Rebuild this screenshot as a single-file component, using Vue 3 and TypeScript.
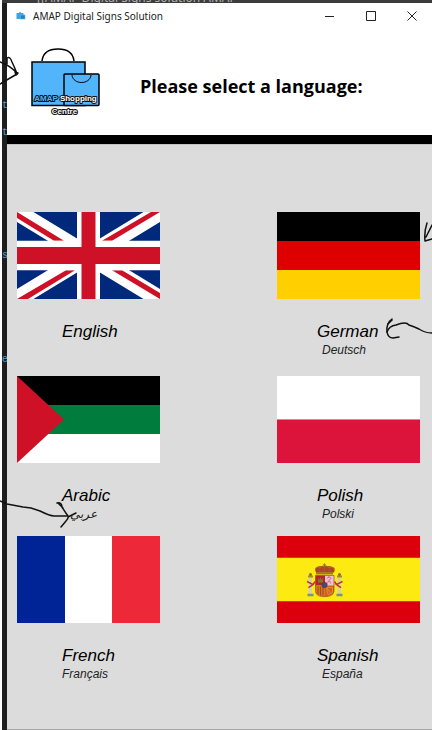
<script setup lang="ts">
import { ref } from 'vue'

interface Language {
  code: string
  name: string
  native: string
}

const languages: Language[] = [
  { code: 'en', name: 'English', native: '' },
  { code: 'de', name: 'German', native: 'Deutsch' },
  { code: 'ar', name: 'Arabic', native: 'عربي' },
  { code: 'pl', name: 'Polish', native: 'Polski' },
  { code: 'fr', name: 'French', native: 'Français' },
  { code: 'es', name: 'Spanish', native: 'España' },
]

const selected = ref('')
</script>

<template>
  <div class="desktop">
    <div class="backdrop" aria-hidden="true">
      <span class="backdrop-title">&nbsp;[[AMAP Digital Signs solution AMAP</span>
      <span class="code code-a">t</span>
      <span class="code code-b">t</span>
      <span class="code code-c">s</span>
      <span class="code code-d">e</span>
    </div>

    <div class="window">
      <div class="titlebar">
        <svg class="app-icon" viewBox="0 0 10 10" aria-hidden="true">
          <path d="M2.500 2.500Q4 0 5.500 2.500" fill="none" stroke="#8a9aa6" />
          <rect x="0.500" y="2" width="7" height="6" fill="#3ba6e2" />
          <rect x="4.500" y="4" width="4.500" height="4" fill="#1d86c4" stroke="#5ab6e8" stroke-width="0.600" />
        </svg>
        <span class="app-name">AMAP Digital Signs Solution</span>
        <button class="control" type="button" aria-label="Minimize">
          <svg viewBox="0 0 10 10"><path d="M0 5.500H9" /></svg>
        </button>
        <button class="control" type="button" aria-label="Maximize">
          <svg viewBox="0 0 10 10"><path d="M0.500 0.500H9.500V9.500H0.500Z" /></svg>
        </button>
        <button class="control" type="button" aria-label="Close">
          <svg viewBox="0 0 10 10"><path d="M0.500 0.500L9.500 9.500M9.500 0.500L0.500 9.500" /></svg>
        </button>
      </div>

      <header class="header">
        <svg class="logo" viewBox="0 0 70 70" role="img" aria-label="AMAP Shopping Centre">
          <path d="M11 14C12 5 19 2 27 2S42 5 43 14" fill="none" stroke="#000" stroke-width="1.500" />
          <rect x="1" y="15" width="53" height="43.500" fill="#52b4fb" stroke="#000" stroke-width="1.500" />
          <rect x="33" y="27" width="35" height="31.500" rx="1" fill="#52b4fb" stroke="#000" stroke-width="1.500" />
          <path d="M41 28C42 38 59 38 60 28" fill="none" stroke="#000" />
          <text class="logo-text" x="34.500" y="53.500"><tspan class="logo-blue">AMAP</tspan> Shopping</text>
          <text class="logo-text" x="33.500" y="66.500">Centre</text>
        </svg>
        <h1>Please select a language:</h1>
      </header>

      <main class="languages">
        <button
          v-for="lang in languages"
          :key="lang.code"
          class="card"
          type="button"
          :aria-pressed="selected === lang.code"
          @click="selected = lang.code"
        >
          <svg v-if="lang.code === 'en'" class="flag" viewBox="0 0 143 86" preserveAspectRatio="none">
            <path fill="#00297b" d="M0 0H143V86H0Z" />
            <path d="M0 0L143 86M143 0L0 86" stroke="#fff" stroke-width="17" />
            <path fill="#ce1126" d="M0 0L47 28.500H37L0 6ZM143 0H134L85 28.500H95L143 0ZM0 86L49 57.500H58L11 86ZM143 86V80L105 57.500H95Z" />
            <path fill="#fff" d="M60 0H83V86H60ZM0 28.500H143V57.500H0Z" />
            <path fill="#ce1126" d="M64.500 0H78.500V86H64.500ZM0 34.500H143V51.500H0Z" />
          </svg>
          <svg v-else-if="lang.code === 'de'" class="flag" viewBox="0 0 143 87" preserveAspectRatio="none">
            <path d="M0 0H143V29H0Z" />
            <path fill="#de0000" d="M0 29H143V58H0Z" />
            <path fill="#ffcf00" d="M0 58H143V87H0Z" />
          </svg>
          <svg v-else-if="lang.code === 'ar'" class="flag" viewBox="0 0 143 87" preserveAspectRatio="none">
            <path d="M0 0H143V29H0Z" />
            <path fill="#007c3d" d="M0 29H143V58H0Z" />
            <path fill="#fff" d="M0 58H143V87H0Z" />
            <path fill="#ce1126" d="M0 0L47 43.500L0 87Z" />
          </svg>
          <svg v-else-if="lang.code === 'pl'" class="flag" viewBox="0 0 143 86" preserveAspectRatio="none">
            <path fill="#fff" d="M0 0H143V43H0Z" />
            <path fill="#dc143c" d="M0 43H143V86H0Z" />
          </svg>
          <svg v-else-if="lang.code === 'fr'" class="flag" viewBox="0 0 143 86" preserveAspectRatio="none">
            <path fill="#002395" d="M0 0H48V86H0Z" />
            <path fill="#fff" d="M48 0H95V86H48Z" />
            <path fill="#ed2939" d="M95 0H143V86H95Z" />
          </svg>
          <svg v-else class="flag" viewBox="0 0 143 86" preserveAspectRatio="none">
            <path fill="#dc000c" d="M0 0H143V86H0Z" />
            <path fill="#fcea10" d="M0 21.500H143V64.500H0Z" />
            <!-- crown -->
            <path fill="#b5402a" d="M39 36C36 31 42 29 47.500 30C53 29 60 31 57 36Z" />
            <path d="M38.500 33Q39 30 43 31Q47.500 28 52 31Q57 30 57.500 33" fill="none" stroke="#a87b18" />
            <path d="M47.500 27V36M46 28.500H49M42 31L43 36M53 31L52 36" stroke="#8c6b20" stroke-width="0.800" />
            <path fill="#a8791c" d="M39 35.500H56V38H39Z" />
            <!-- shield -->
            <path fill="#b8222a" d="M38.500 39H48V49H38.500Z" />
            <path fill="#e9c3c9" d="M48 39H57V49H48Z" />
            <path fill="#cf7a1c" d="M38.500 49H48V60Q39 59 38.500 55Z" />
            <path fill="#d0611f" d="M48 49H57V55Q56 59 48 60Z" />
            <path d="M41 50V58M43.500 50V59M46 50V59" stroke="#a33a24" stroke-width="0.800" />
            <path d="M49.500 51H55.500V56L51 58ZM49.500 51L54 57" fill="none" stroke="#dc9930" stroke-width="0.800" />
            <path d="M50 42L52 40L54 42L52 44L54 47M50 47L52 44" fill="none" stroke="#d873a0" />
            <path fill="#7c7a27" d="M41 46V42H42V43H43V41H44V43H45V42H46V46Z" />
            <path d="M38.500 39H57V55Q56 60 47.500 60Q39 60 38.500 55Z" fill="none" stroke="#9c4b24" stroke-width="0.700" />
            <circle cx="47.500" cy="48.500" r="2.700" fill="#31527d" stroke="#8e2733" stroke-width="0.700" />
            <!-- pillars -->
            <path fill="#d6d0ab" d="M31.500 41H35V57H31.500ZM60.500 41H64V57H60.500Z" />
            <path fill="#a58a30" d="M31 39H36V41H31ZM60 39H65V41H60Z" />
            <circle cx="33.500" cy="38" r="1.500" fill="#8e6b25" />
            <circle cx="62.500" cy="38" r="1.500" fill="#8e6b25" />
            <path fill="#72958b" d="M30.500 57H36.500V59.500H30.500ZM59.500 57H65.500V59.500H59.500Z" />
            <path d="M30 45L36 48L31.500 51M36 48L38 45M65.500 45L59.500 48L64 51M59.500 48L57.500 45" fill="none" stroke="#c2343a" stroke-width="1.500" />
          </svg>
          <span class="name">{{ lang.name }}</span>
          <span v-if="lang.native" class="native" :class="{ arabic: lang.code === 'ar' }" :lang="lang.code">{{ lang.native }}</span>
        </button>
      </main>
    </div>

    <!-- hand-drawn arrows over the window -->
    <svg class="ink ink-left" viewBox="0 0 110 540" aria-hidden="true">
      <path d="M0 62Q9 65 17 73M7 64V58Q10 56 12 62Q15 68 17 74L5 81M0 84L5 81" />
      <path d="M15 72L18 73L16 75Z" />
      <path d="M0 501L7 504L23 507L31 508L40 511Q50 516 54 516H67" />
      <path d="M57 503Q62 502 62 507Q65 512 68 516Q69 518 66 521L61 527M58 503L63 508M68 517L76 513" />
    </svg>
    <svg class="ink ink-right" viewBox="0 0 60 540" aria-hidden="true">
      <path d="M55 223Q52 232 53 241L60 239M54 237L60 225" />
      <path d="M20 319Q14 323 15 332Q16 338 21 338L27 337" />
      <path d="M15 332Q17 326 24 325Q34 321 37 325Q43 327 47 329Q53 333 60 333" />
      <path d="M16 324L20 320" />
    </svg>
  </div>
</template>

<style>
body {
  margin: 0;
  background: #1e1e1e;
}
</style>

<style scoped>
.desktop {
  position: relative;
  box-sizing: border-box;
  display: flex;
  min-height: 100vh;
  padding: 3px 0 0 7px;
  overflow: hidden;
  background: #1e1e1e;
}

.backdrop {
  position: absolute;
  inset: 0;
  box-sizing: border-box;
  overflow: hidden;
  border-left: 2px solid #fdfdfd;
  background: linear-gradient(#3c3c3c 3px, #1e1e1e 3px);
  font-family: "Liberation Mono", monospace;
}

.backdrop-title {
  position: absolute;
  top: -8px;
  left: 32px;
  color: #b0b0b0;
  font: 12px/12px "Noto Sans", sans-serif;
}

.code {
  position: absolute;
  left: 0;
  color: #4e9fd0;
  font-size: 10px;
  line-height: 12px;
}

.code-a { top: 100px; }
.code-b { top: 127px; }
.code-c { top: 250px; }
.code-d { top: 354px; }

.window {
  position: relative;
  box-sizing: border-box;
  display: flex;
  flex: 1;
  flex-direction: column;
  border-bottom: 1px solid #a6a6a6;
  background: #dcdcdc;
}

.titlebar {
  display: flex;
  align-items: center;
  height: 25px;
  padding-left: 9px;
  background: #fff;
}

.app-icon {
  width: 10px;
  height: 10px;
  margin-right: 7px;
}

.app-name {
  flex: 1;
  color: #222;
  font: 10px/14px "Noto Sans", sans-serif;
  white-space: nowrap;
}

.control {
  display: flex;
  align-items: center;
  justify-content: center;
  width: 41px;
  height: 25px;
  padding: 0;
  border: 0;
  background: none;
}

.control svg {
  width: 10px;
  height: 10px;
  fill: none;
  stroke: #222;
  stroke-width: 1;
}

.header {
  display: flex;
  align-items: center;
  gap: 39px;
  height: 107px;
  padding-left: 24px;
  border-bottom: 9px solid #000;
  background: #fff;
}

.logo {
  flex: none;
  width: 70px;
  height: 70px;
}

.logo-text {
  fill: #fff;
  stroke: #111;
  stroke-width: 2px;
  stroke-linejoin: round;
  paint-order: stroke;
  font: bold 8px "Liberation Sans Narrow", "Liberation Sans", sans-serif;
  text-anchor: middle;
}

.logo-blue {
  fill: #52b4fb;
}

h1 {
  margin: 0;
  padding-top: 8px;
  color: #000;
  font: bold 18px/24px "Open Sans", sans-serif;
}

.languages {
  display: grid;
  flex: 1;
  grid-template-columns: auto auto;
  grid-template-rows: 164px 160px auto;
  justify-content: space-between;
  padding: 67px 12px 0 10px;
  border-top: 1px solid #c4c4c4;
}

.card {
  display: flex;
  flex-direction: column;
  align-items: flex-start;
  padding: 0;
  border: 0;
  background: none;
  color: #000;
  font-family: "Liberation Sans", Arial, sans-serif;
  font-style: italic;
  text-align: left;
}

.flag {
  display: block;
  width: 143px;
  height: 87px;
  margin-bottom: 23px;
}

.name,
.native {
  padding-left: 45px;
}

.card:nth-child(even) .name {
  padding-left: 40px;
}

.name {
  font-size: 17px;
  line-height: 20px;
}

.native {
  color: #222;
  font-size: 12px;
  line-height: 16px;
}

.native.arabic {
  padding-left: 53px;
  font-family: "DejaVu Sans", sans-serif;
}

.ink {
  position: absolute;
  top: 0;
  height: 540px;
  fill: none;
  stroke: #111;
  stroke-width: 1.5;
  stroke-linecap: round;
  stroke-linejoin: round;
  pointer-events: none;
}

.ink-left {
  left: 0;
  width: 110px;
}

.ink-right {
  right: 0;
  width: 60px;
}
</style>
